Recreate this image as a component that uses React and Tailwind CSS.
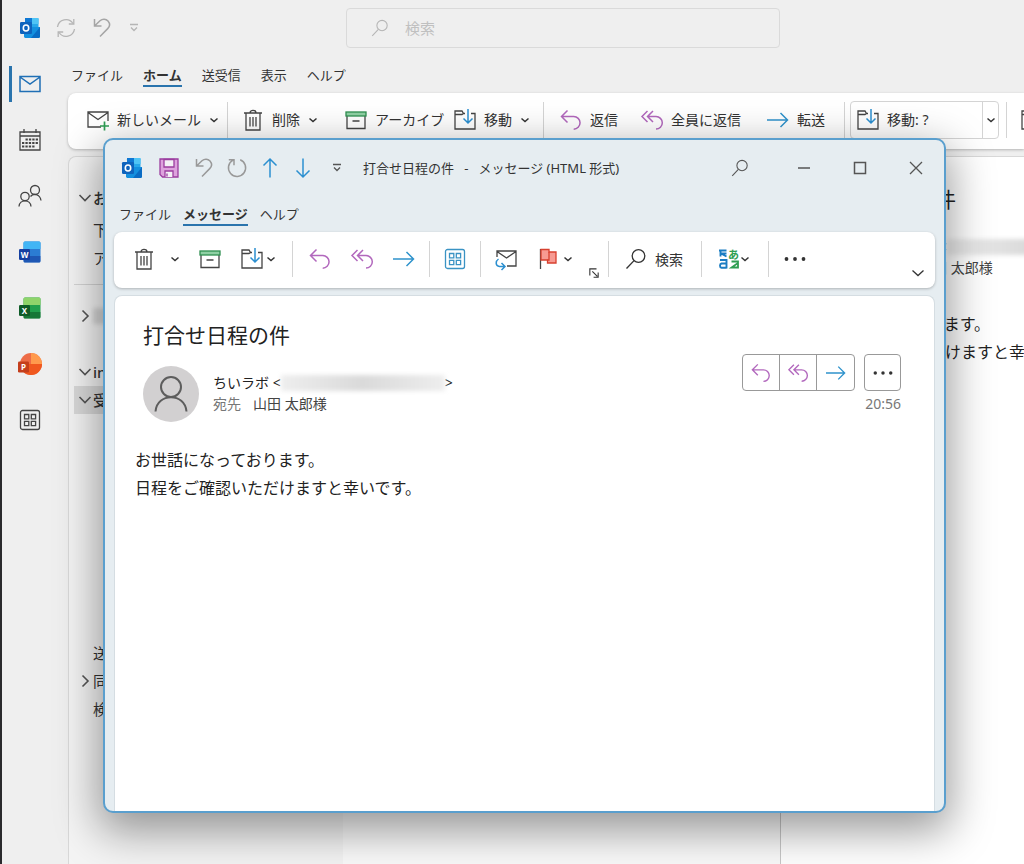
import React, { useState } from 'react';

const Svg = ({ size = 22, box = 22, className = '', children }) => (
    <svg
        width={size}
        height={size}
        viewBox={`0 0 ${box} ${box}`}
        fill="none"
        stroke="currentColor"
        strokeWidth="1.3"
        className={`shrink-0 overflow-visible ${className}`}
        aria-hidden="true"
    >
        {children}
    </svg>
);

const OutlookIcon = () => (
    <Svg size={20} box={20}>
        <g stroke="none">
            <rect x="5" y="0" width="13.5" height="12" rx="1.2" fill="#28a8ea" />
            <rect x="5" y="0" width="7" height="6" fill="#0f78d4" />
            <rect x="12" y="0" width="6.5" height="6" fill="#4fc4f5" />
            <path d="M4 9h16v9.600c0 .8-.6 1.400-1.400 1.400H5.400C4.600 20 4 19.400 4 18.600z" fill="#1490df" />
            <path d="M20 9v9.600c0 .8-.6 1.400-1.400 1.400H11z" fill="#0a6cc4" />
            <rect x="0" y="4" width="12" height="12" rx="1.200" fill="#0f64bd" />
        </g>
        <ellipse cx="6" cy="10" rx="2.700" ry="3" stroke="#fff" strokeWidth="1.600" />
    </Svg>
);

const SyncIcon = () => (
    <Svg size={20} box={20}>
        <path d="M1.500 9A8.500 8.500 0 0 1 17 5.500M18.500 11A8.500 8.500 0 0 1 3 14.500" />
        <path d="M17.800 1v5h-5M2.200 19v-5h5" />
    </Svg>
);

const UndoIcon = () => (
    <Svg size={20} box={20}>
        <path d="M2.500 1v7h7M2.800 7.800L8 2.800c2.600-2.400 6-2 8 .2 2 2.300 1.900 5.400-.3 7.600L8 18.500" strokeWidth="1.500" />
    </Svg>
);

const RedoIcon = () => (
    <Svg size={20} box={20}>
        <path d="M13.200 1.800A8.600 8.600 0 1 1 6 2.200M1.800 1.800H7v5.400" strokeWidth="1.500" />
    </Svg>
);

const CustomizeIcon = () => (
    <Svg size={12} box={12}>
        <path d="M2 2.500h8M3 5.500l3 3 3-3" />
    </Svg>
);

const ChevronIcon = () => (
    <Svg size={10} box={10}>
        <path d="M1.500 3.500L5 6.500l3.500-3" strokeWidth="1.500" />
    </Svg>
);

const SearchIcon = ({ size = 22 }) => (
    <Svg size={size}>
        <circle cx="13.500" cy="8" r="6.300" />
        <path d="M9 12.600L1.500 20.500" />
    </Svg>
);

const NewMailIcon = () => (
    <Svg className="text-[#444]">
        <path d="M14 18H1V3h20v9M1 3.500l10 7 10-7" />
        <path d="M17.500 12.500v9M13 17h9" stroke="#2e9e54" strokeWidth="1.700" />
    </Svg>
);

const TrashIcon = () => (
    <Svg className="text-[#444]">
        <path d="M2 4h18M8 4c0-3.500 6-3.500 6 0M4 4v17h14V4M8 8v9.500M11 8v9.500M14 8v9.500" />
    </Svg>
);

const ArchiveIcon = () => (
    <Svg className="text-[#444]">
        <path d="M2 7v12.500h18V7M7.500 12h7" />
        <rect x="1" y="3" width="20" height="4" fill="#8fd0a4" stroke="#2f8f50" />
    </Svg>
);

const MoveIcon = () => (
    <Svg className="text-[#444]">
        <path d="M11 4.500H9.500L8 2H1v18h20V4.500h-4M1 5.500h7l1.500-1" />
        <path d="M14 0v14M9.500 9.500L14 14l4.500-4.500" stroke="#2b8fd0" strokeWidth="1.500" />
    </Svg>
);

const ReplyIcon = ({ size }) => (
    <Svg size={size} className="text-[#b268bd]">
        <path d="M7.500 1.500L1.500 7.500l6 6M1.500 7.500h12.200a6.300 6.300 0 0 1 0 12.700" strokeWidth="1.500" />
    </Svg>
);

const ReplyAllIcon = ({ size }) => (
    <Svg size={size} className="text-[#b268bd]">
        <path d="M6.500 2L1 7.500 6.500 13M12 2L6.500 7.500 12 13M6.500 7.500H15a6.300 6.300 0 0 1 0 12.600" strokeWidth="1.500" />
    </Svg>
);

const ForwardIcon = ({ size }) => (
    <Svg size={size} className="text-[#2f93cc]">
        <path d="M0 11h20.500M13.500 4l7 7-7 7" strokeWidth="1.500" />
    </Svg>
);

const GridIcon = () => (
    <Svg>
        <rect x="1.500" y="1.500" width="19" height="19" rx="2" />
        <path d="M5.500 5.500h4.300v4.300H5.500zM12.300 5.500h4.300v4.300h-4.300zM5.500 12.300h4.300v4.300H5.500zM12.300 12.300h4.300v4.300h-4.300z" />
    </Svg>
);

const ReplyMailIcon = () => (
    <Svg className="text-[#444]">
        <path d="M2 9V3h19v15h-9M2 3.500L11.500 10 21 3.500" />
        <path d="M3.500 11c-3 2-3.500 7 1 7.500h5M6.500 15l3.500 3.500L6.500 22" stroke="#2b8fd0" strokeWidth="1.500" />
    </Svg>
);

const FlagIcon = () => (
    <Svg className="text-[#444]">
        <path d="M3.500 1v20" />
        <path d="M4 1.500h8V4h7v11h-8.500v-3H4z" fill="#f79a92" stroke="#d8402f" />
        <path d="M12 4v8h-1.500" stroke="#d8402f" />
    </Svg>
);

const TranslateIcon = () => (
    <Svg>
        <text x="10" y="11" fontSize="11" fontWeight="700" fill="#2f9e52" stroke="none">あ</text>
        <path d="M1 2.500h7.500M2.500 2.500v6M8.500 8.500L3 5.500h5.500" stroke="#1b7dc2" strokeWidth="1.900" />
        <path d="M2 12h6.500v8.500M8.500 15.500H3.500c-2 .5-2 4 0 4.200h5" stroke="#1b7dc2" strokeWidth="1.900" />
        <path d="M13.500 13.500h6.500v7M20 19.500h-6.500l6.500-4.500" stroke="#2f9e52" strokeWidth="1.800" />
    </Svg>
);

const SaveIcon = () => (
    <Svg size={20} box={20}>
        <path d="M1 1h18v18H3.500L1 16.500z" fill="#dda2dd" stroke="#9b3d9f" />
        <path d="M5 1.500h10V9H5z" fill="#f4f0f6" stroke="#9b3d9f" />
        <path d="M6 19v-6h8v6" fill="#f4f0f6" stroke="#9b3d9f" />
        <path d="M8 15.500v3" stroke="#9b3d9f" />
    </Svg>
);

const DotsIcon = ({ size }) => (
    <Svg size={size} className="text-[#333]">
        <g fill="currentColor" stroke="none">
            <circle cx="2.500" cy="11" r="1.900" />
            <circle cx="11" cy="11" r="1.900" />
            <circle cx="19.500" cy="11" r="1.900" />
        </g>
    </Svg>
);

const PersonIcon = ({ size = 36 }) => (
    <Svg size={size} box={36} className="text-[#5d5d5d]">
        <path d="M2.500 35.500C4 16.500 32 16.500 33.500 35.500" strokeWidth="2" />
        <circle cx="18" cy="11" r="10" strokeWidth="2" fill="#d2d0d1" />
    </Svg>
);

const AppIcon = ({ letter, light, main, dark }) => (
    <Svg>
        <g stroke="none">
            <rect x="4.500" y="0.500" width="17" height="21" rx="1.500" fill={main} />
            <path d="M6 .5h14c.8 0 1.500.7 1.500 1.500v6h-17V2C4.500 1.200 5.200.5 6 .5z" fill={light} />
            <path d="M4.500 15h17v5c0 .8-.7 1.500-1.500 1.500H6c-.8 0-1.500-.7-1.500-1.500z" fill={dark} opacity=".6" />
            <rect x="0" y="8" width="11" height="11" rx="1.200" fill={dark} />
            <text x="5.500" y="16.500" fontSize="8" fontWeight="700" textAnchor="middle" fill="#fff">{letter}</text>
        </g>
    </Svg>
);

const PowerPointIcon = () => (
    <Svg size={24} box={24}>
        <g stroke="none">
            <circle cx="13" cy="12" r="11" fill="#ed6c47" />
            <path d="M13 1a11 11 0 0 1 11 11H13z" fill="#ff9a4d" />
            <path d="M2 12h22a11 11 0 0 1-22 0z" fill="#f0581f" />
            <rect x="0" y="9.500" width="11" height="11" rx="1.200" fill="#c43e1c" />
            <text x="5.500" y="18" fontSize="8" fontWeight="700" textAnchor="middle" fill="#fff">P</text>
        </g>
    </Svg>
);

const railItems = [
    {
        label: 'Mail',
        icon: (
            <Svg className="text-[#1f6fb5]">
                <path d="M1 3.500h20v15H1zM1 4l10 7 10-7" strokeWidth="1.500" />
            </Svg>
        ),
    },
    {
        label: 'Calendar',
        icon: (
            <Svg>
                <path d="M1 3h20v18H1zM1 7h20M5 0v4M17 0v4" />
                <path d="M6.500 10.500h12.500M3 14h16M3 17.500h12.500" strokeWidth="2.200" strokeDasharray="2.300 1.100" />
            </Svg>
        ),
    },
    {
        label: 'People',
        icon: (
            <Svg size={24} box={24}>
                <circle cx="7" cy="12.500" r="4.200" />
                <path d="M1 22.500c.5-7.500 11.500-7.500 12 0" />
                <circle cx="17" cy="6" r="4.500" />
                <path d="M12.500 12.500c3-3.500 9.500-2.500 10.500 4" />
            </Svg>
        ),
    },
    { label: 'Word', icon: <AppIcon letter="W" light="#41b5f5" main="#2b7cd3" dark="#153fa0" /> },
    { label: 'Excel', icon: <AppIcon letter="X" light="#8fd46a" main="#21a04c" dark="#0f5c28" /> },
    { label: 'PowerPoint', icon: <PowerPointIcon /> },
    { label: 'Apps', icon: <GridIcon /> },
];

const Separator = ({ className = '' }) => (
    <span className={`h-9 w-px shrink-0 bg-[#d4d4d4] ${className}`} />
);

const Tabs = ({ items, active, onSelect, className }) => (
    <nav className={`flex items-center pt-[2px] text-[13px] leading-5 ${className}`}>
        {items.map(item => (
            <button
                key={item}
                onClick={() => onSelect(item)}
                className={`border-b-2 ${active === item ? 'border-[#2a74ad] font-bold' : 'border-transparent'}`}
            >
                {item}
            </button>
        ))}
    </nav>
);

const RibbonButton = ({ icon, text, menu, className }) => (
    <button className={`flex shrink-0 items-center gap-2 ${className}`}>
        {icon}
        <span>{text}</span>
        {menu && <ChevronIcon />}
    </button>
);

const IconButton = ({ label, className = '', children }) => (
    <button aria-label={label} className={`flex shrink-0 items-center justify-center ${className}`}>
        {children}
    </button>
);

const Chevron = ({ open, label }) => (
    <button aria-label={label} className="flex w-4 shrink-0 justify-center text-[#555]">
        <Svg size={14} box={14}>
            <path d={open ? 'M1.500 4l5.500 5.500L12.500 4' : 'M4.500 1.500L10 7l-5.500 5.500'} strokeWidth="1.600" />
        </Svg>
    </button>
);

const Folder = ({ name, toggle, bold, selected, className = '', children }) => (
    <li className={`flex h-7 items-center pl-[3px] ${bold ? 'font-medium' : ''} ${selected ? 'bg-[#d9d9d9]' : ''} ${className}`}>
        {toggle ? <Chevron open={toggle === 'open'} label={name} /> : <span className="w-4 shrink-0" />}
        {name}
        {children}
    </li>
);

const Message = ({ actions, className = '' }) => (
    <article className={`text-[#222] ${className}`}>
        <h1 className="pl-7 text-[21px] leading-8">打合せ日程の件</h1>
        <div className="mt-[3px] flex items-start pl-7 pr-[33px]">
            <span className="mt-3 flex h-14 w-14 shrink-0 items-center justify-center rounded-full bg-[#d2d0d1]">
                <PersonIcon />
            </span>
            <div className="ml-[14px] mt-[18px] flex-1 whitespace-nowrap text-[14px] leading-[21px]">
                <p className="flex items-center">
                    ちいラボ&nbsp;&lt;
                    <span className="h-4 w-[164px] shrink-0 bg-linear-to-r from-[#eee] via-[#dadada] to-[#eee] blur-[2px]" />
                    &gt;
                </p>
                <p className="flex gap-3 text-[#444]">
                    <span className="text-[#777]">宛先</span>
                    <span>山田 太郎様</span>
                </p>
            </div>
            {actions}
        </div>
        <div className="mt-6 whitespace-nowrap pl-5 text-base leading-7">
            <p>お世話になっております。</p>
            <p>日程をご確認いただけますと幸いです。</p>
        </div>
    </article>
);

const MessageActions = () => (
    <div className="flex shrink-0 flex-col items-end">
        <div className="flex gap-[9px]">
            <div className="flex h-[37px] divide-x divide-[#999] rounded border border-[#999]">
                <IconButton label="返信" className="w-[37px]"><ReplyIcon size={20} /></IconButton>
                <IconButton label="全員に返信" className="w-[37px]"><ReplyAllIcon size={20} /></IconButton>
                <IconButton label="転送" className="w-[37px]"><ForwardIcon size={20} /></IconButton>
            </div>
            <IconButton label="その他" className="h-[37px] w-[37px] rounded border border-[#999]">
                <DotsIcon size={20} />
            </IconButton>
        </div>
        <time className="mt-[3px] text-[14px] leading-5 text-[#777]">20:56</time>
    </div>
);

const MessageWindow = () => {
    const [tab, setTab] = useState('メッセージ');

    return (
        <section className="absolute bottom-[51px] left-[103px] right-[78px] top-[138px] flex flex-col overflow-hidden rounded-[10px] border-2 border-[#5a9fce] bg-[#e6edf1] shadow-[0_14px_44px_4px_rgba(0,0,0,0.4)]">
            <header className="flex h-14 shrink-0 items-center text-[#555]">
                <div className="flex items-center gap-[17px] pl-[17px]">
                    <OutlookIcon />
                    <IconButton label="保存"><SaveIcon /></IconButton>
                    <IconButton label="元に戻す" className="w-4 text-[#999]"><UndoIcon /></IconButton>
                    <IconButton label="やり直し" className="w-4 text-[#999]"><RedoIcon /></IconButton>
                    <IconButton label="前へ" className="w-4 text-[#2b8fd0]">
                        <Svg size={20} box={20}><path d="M10 19.500V1M3.500 7.500L10 1l6.500 6.500" strokeWidth="1.500" /></Svg>
                    </IconButton>
                    <IconButton label="次へ" className="w-4 text-[#2b8fd0]">
                        <Svg size={20} box={20}><path d="M10 .5V19M3.500 12.500L10 19l6.500-6.500" strokeWidth="1.500" /></Svg>
                    </IconButton>
                    <div className="flex items-center gap-5 pl-[3px]">
                        <IconButton label="カスタマイズ"><CustomizeIcon /></IconButton>
                        <span className="whitespace-pre text-[13px] leading-5 text-[#333]">打合せ日程の件   -   メッセージ (HTML 形式)</span>
                    </div>
                </div>
                <div className="ml-auto flex items-center">
                    <IconButton label="検索" className="mr-2 w-14"><SearchIcon size={18} /></IconButton>
                    <IconButton label="最小化" className="w-14">
                        <Svg size={14} box={14}><path d="M1 7h12" /></Svg>
                    </IconButton>
                    <IconButton label="最大化" className="w-14">
                        <Svg size={14} box={14}><rect x="1.500" y="1.500" width="11" height="11" strokeWidth="1.500" /></Svg>
                    </IconButton>
                    <IconButton label="閉じる" className="w-14">
                        <Svg size={14} box={14}><path d="M1 1l12 12M13 1L1 13" /></Svg>
                    </IconButton>
                </div>
            </header>
            <Tabs
                items={['ファイル', 'メッセージ', 'ヘルプ']}
                active={tab}
                onSelect={setTab}
                className="h-9 shrink-0 gap-3 pl-[14px] text-[#333]"
            />
            <div className="mx-[9px] flex h-14 shrink-0 items-center rounded-lg bg-white pb-[2px] text-[14px] text-[#333] shadow-[0_1px_3px_rgba(0,0,0,0.25)]">
                <IconButton label="削除" className="ml-[19px]"><TrashIcon /></IconButton>
                <IconButton label="削除メニュー" className="ml-[15px]"><ChevronIcon /></IconButton>
                <IconButton label="アーカイブ" className="ml-[19px]"><ArchiveIcon /></IconButton>
                <IconButton label="移動" className="ml-5 gap-[3px]"><MoveIcon /><ChevronIcon /></IconButton>
                <Separator className="ml-4 mr-4" />
                <div className="flex gap-5">
                    <IconButton label="返信"><ReplyIcon /></IconButton>
                    <IconButton label="全員に返信"><ReplyAllIcon /></IconButton>
                    <IconButton label="転送"><ForwardIcon /></IconButton>
                </div>
                <Separator className="mx-[14px]" />
                <IconButton label="クイック操作" className="text-[#3a93c4]"><GridIcon /></IconButton>
                <Separator className="mx-[14px]" />
                <IconButton label="未読"><ReplyMailIcon /></IconButton>
                <IconButton label="フラグ" className="ml-5 gap-1"><FlagIcon /><ChevronIcon /></IconButton>
                <IconButton label="オプション" className="ml-4 mt-7">
                    <Svg size={10} box={12}><path d="M1 9V1h8M4 4l6 6M11 5.500V11H5.500" /></Svg>
                </IconButton>
                <Separator className="ml-[9px] mr-4" />
                <RibbonButton icon={<SearchIcon />} text="検索" />
                <Separator className="ml-[18px] mr-4" />
                <IconButton label="翻訳"><TranslateIcon /><ChevronIcon /></IconButton>
                <Separator className="ml-[18px] mr-[15px]" />
                <IconButton label="その他"><DotsIcon /></IconButton>
                <IconButton label="リボン" className="ml-auto mr-[10px] mt-7">
                    <Svg size={14} box={14}><path d="M1.500 4.500l5.500 5 5.500-5" /></Svg>
                </IconButton>
            </div>
            <div className="mx-[9px] mt-[7px] flex-1 rounded-t-lg border border-b-0 border-[#d5dde2] bg-white pt-[23px]">
                <Message actions={<MessageActions />} />
            </div>
        </section>
    );
};

const App = () => {
    const [tab, setTab] = useState('ホーム');

    return (
        <div className="relative flex h-screen overflow-hidden bg-[#efefef] font-['Noto_Sans','Noto_Sans_CJK_JP',sans-serif] text-[#333]">
            <div className="w-[2px] shrink-0 bg-[#2a2a2d]" />
            <div className="flex min-w-0 flex-1 flex-col">
                <header className="flex h-14 shrink-0 items-center gap-4 pl-[18px] text-[#b5b5b5]">
                    <OutlookIcon />
                    <IconButton label="送受信"><SyncIcon /></IconButton>
                    <IconButton label="元に戻す" className="text-[#a5a5a5]"><UndoIcon /></IconButton>
                    <IconButton label="カスタマイズ"><CustomizeIcon /></IconButton>
                    <label className="ml-[190px] mr-[244px] flex h-10 flex-1 items-center gap-4 rounded border border-[#dadada] pl-6">
                        <SearchIcon size={18} />
                        <input
                            type="text"
                            aria-label="検索"
                            placeholder="検索"
                            className="min-w-0 flex-1 bg-transparent text-[15px] outline-none placeholder:text-[#c0c0c0]"
                        />
                    </label>
                </header>
                <div className="flex min-h-0 flex-1">
                    <nav className="w-[66px] shrink-0">
                        {railItems.map((item, index) => (
                            <a
                                key={item.label}
                                href="#"
                                aria-label={item.label}
                                className="flex h-14 items-center"
                            >
                                <span className={`ml-[7px] h-9 w-[3px] ${index === 0 ? 'bg-[#2a74ad]' : ''}`} />
                                <span className="flex w-9 justify-center text-[#444]">{item.icon}</span>
                            </a>
                        ))}
                    </nav>
                    <main className="flex min-w-0 flex-1 flex-col">
                        <Tabs
                            items={['ファイル', 'ホーム', '送受信', '表示', 'ヘルプ']}
                            active={tab}
                            onSelect={setTab}
                            className="h-[37px] shrink-0 gap-5 pl-[3px]"
                        />
                        <div className="flex h-14 shrink-0 items-center overflow-hidden whitespace-nowrap rounded-l-lg bg-white pb-[3px] text-[14px] shadow-[0_1px_3px_rgba(0,0,0,0.25)]">
                            <RibbonButton icon={<NewMailIcon />} text="新しいメール" menu className="ml-[19px] w-[140px]" />
                            <Separator />
                            <RibbonButton icon={<TrashIcon />} text="削除" menu className="ml-[14px] w-[103px]" />
                            <RibbonButton icon={<ArchiveIcon />} text="アーカイブ" className="w-[109px]" />
                            <RibbonButton icon={<MoveIcon />} text="移動" menu className="w-[89px]" />
                            <Separator />
                            <RibbonButton icon={<ReplyIcon />} text="返信" className="ml-4 w-[81px]" />
                            <RibbonButton icon={<ReplyAllIcon />} text="全員に返信" className="w-[126px]" />
                            <RibbonButton icon={<ForwardIcon />} text="転送" className="w-[77px]" />
                            <Separator />
                            <div className="mx-[5px] flex h-[38px] w-[149px] shrink-0 divide-x divide-[#d4d4d4] rounded border border-[#d4d4d4]">
                                <RibbonButton icon={<MoveIcon />} text="移動: ?" className="flex-1 pl-[6px]" />
                                <IconButton label="移動先" className="w-[15px]"><ChevronIcon /></IconButton>
                            </div>
                            <Separator className="ml-[2px] mr-[14px]" />
                            <IconButton label="ルール"><MoveIcon /></IconButton>
                        </div>
                        <div className="mt-[7px] flex min-h-0 flex-1 rounded-tl-lg border-l border-t border-[#d8d8d8] bg-[#f4f4f4]">
                            <ul className="w-[274px] shrink-0 pl-[5px] pt-[27px] text-[15px]">
                                <Folder name="お" toggle="open" bold />
                                <Folder name="下" className="mt-1" />
                                <Folder name="ア" />
                                <li className="mb-[17px] mt-3 border-t border-[#d4d4d4]" />
                                <Folder name="" toggle="closed">
                                    <span className="h-4 w-12 bg-[#d6d6d6] blur-[2px]" />
                                </Folder>
                                <Folder name="in" toggle="open" bold className="mt-7" />
                                <Folder name="受" toggle="open" bold selected />
                                <Folder name="送" className="mt-[225px]" />
                                <Folder name="同" toggle="closed" />
                                <Folder name="検" />
                            </ul>
                            <div className="w-[438px] shrink-0 border-r border-[#c8c8c8] bg-[#fafafa]" />
                            <div className="min-w-0 flex-1 overflow-hidden bg-white pt-[26px]">
                                <Message />
                            </div>
                        </div>
                    </main>
                </div>
            </div>
            <MessageWindow />
        </div>
    );
};

export default App;
